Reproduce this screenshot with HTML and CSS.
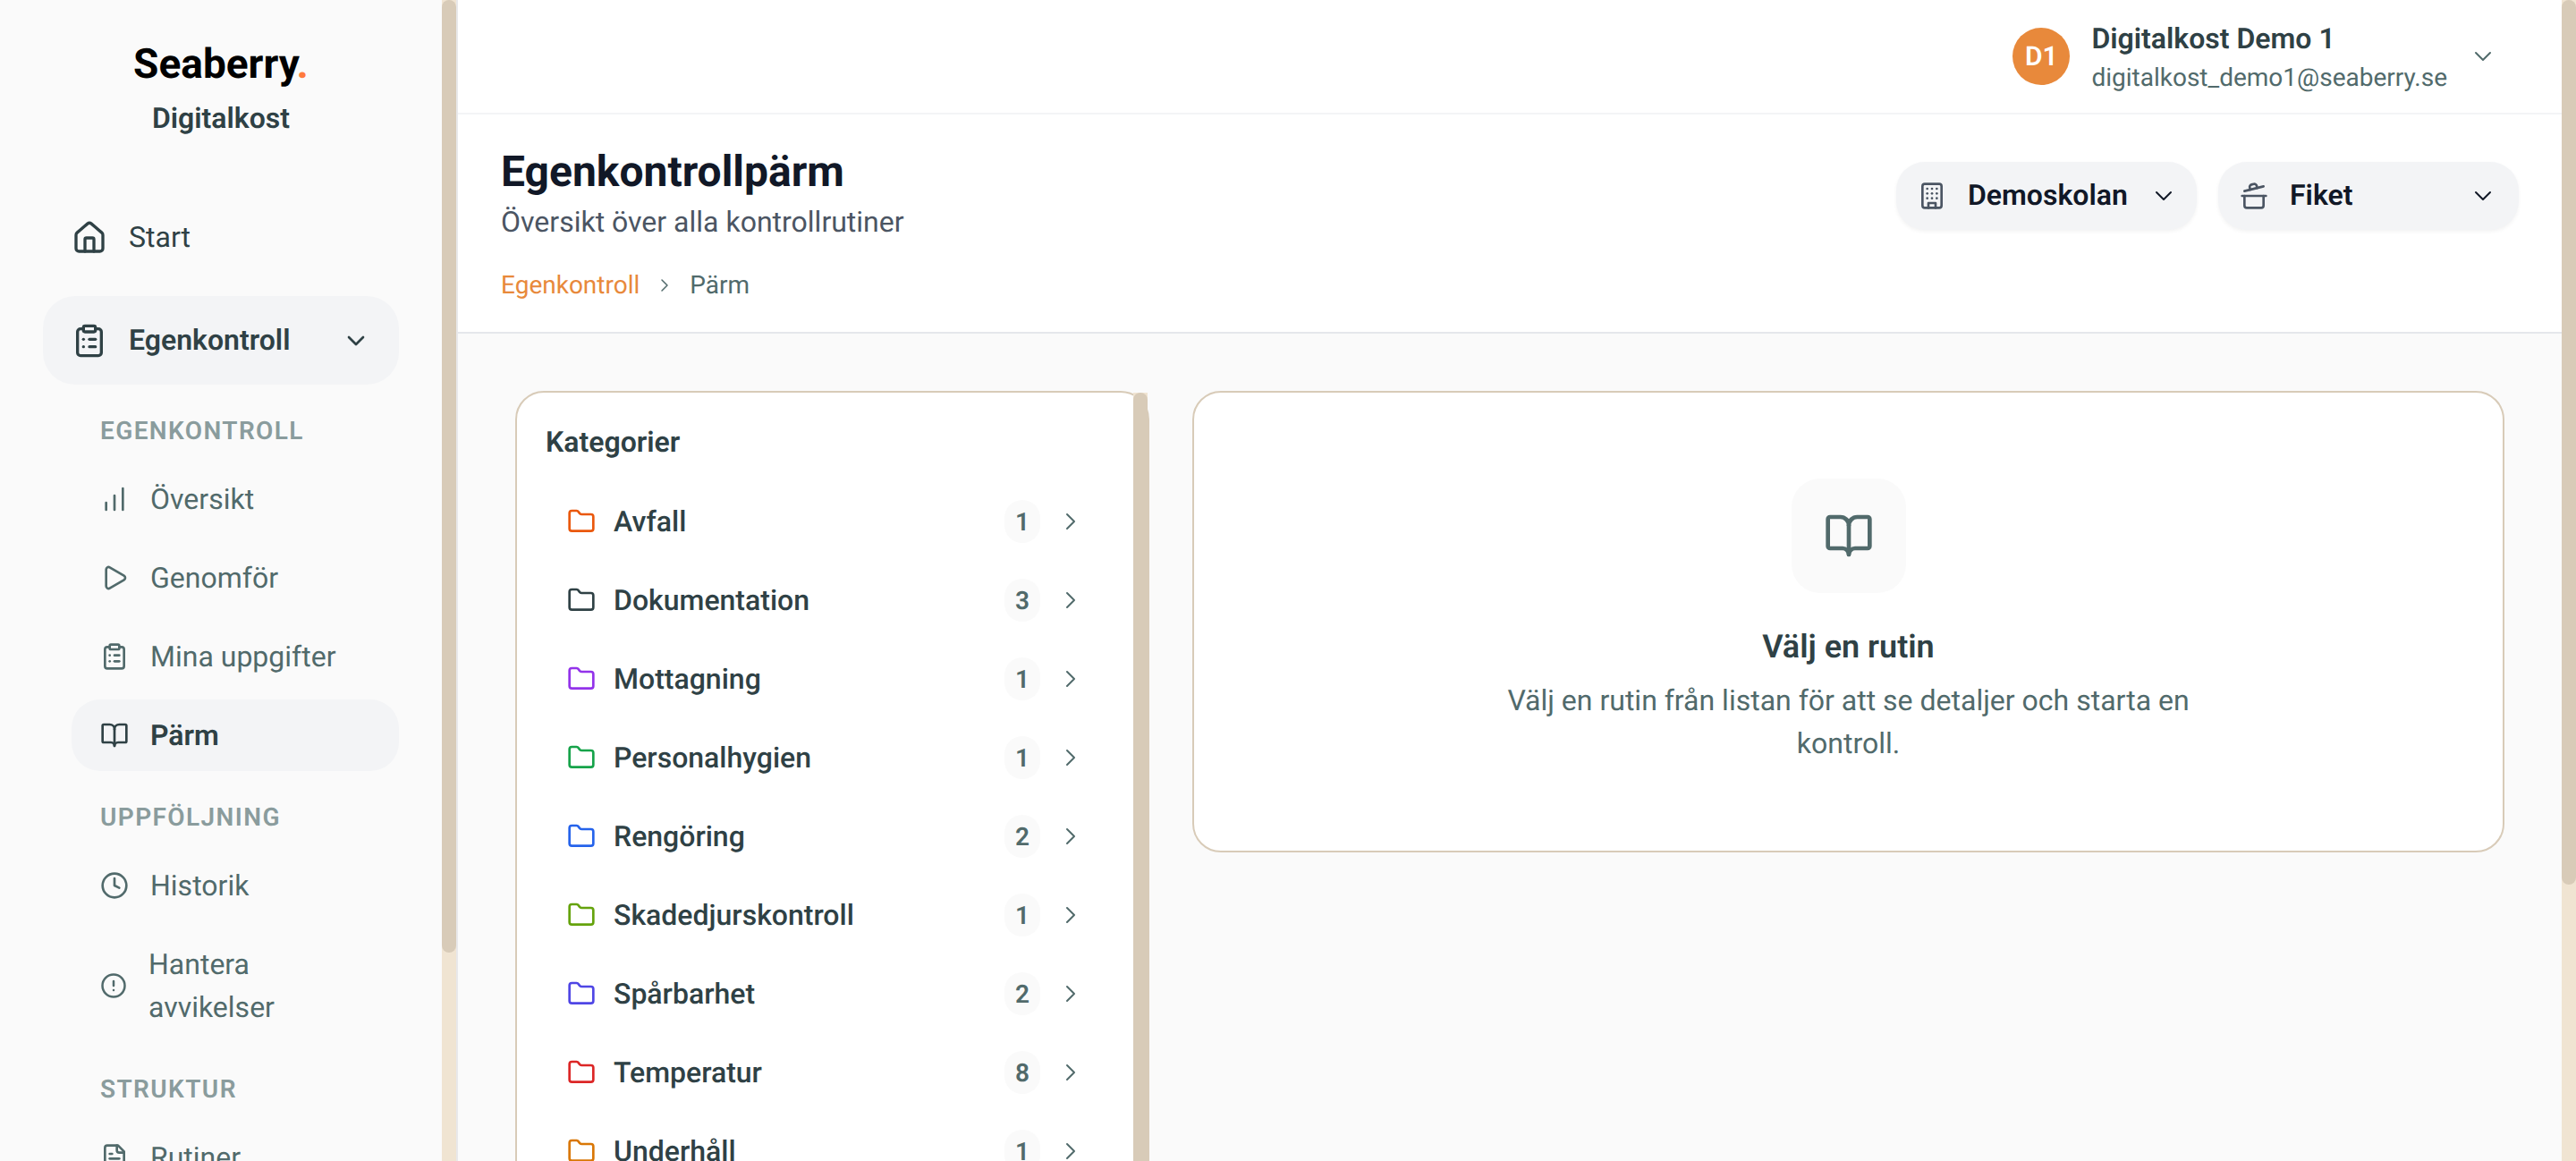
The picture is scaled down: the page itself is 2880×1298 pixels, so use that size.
FILE: index.html
```html
<!DOCTYPE html>
<html lang="sv">
<head>
<meta charset="utf-8">
<title>Egenkontrollpärm</title>
<link rel="stylesheet" href="styles.css">
</head>
<body>
<svg class="sprite" xmlns="http://www.w3.org/2000/svg">
  <symbol id="i-home" viewBox="0 0 24 24"><path d="M15 21v-8a1 1 0 0 0-1-1h-4a1 1 0 0 0-1 1v8"/><path d="M3 10a2 2 0 0 1 .709-1.528l7-5.999a2 2 0 0 1 2.582 0l7 5.999A2 2 0 0 1 21 10v9a2 2 0 0 1-2 2H5a2 2 0 0 1-2-2z"/></symbol>
  <symbol id="i-clip" viewBox="0 0 24 24"><rect x="8" y="2" width="8" height="4" rx="1" ry="1"/><path d="M16 4h2a2 2 0 0 1 2 2v14a2 2 0 0 1-2 2H6a2 2 0 0 1-2-2V6a2 2 0 0 1 2-2h2"/><path d="M12 11h4"/><path d="M12 16h4"/><path d="M8 11h.01"/><path d="M8 16h.01"/></symbol>
  <symbol id="i-down" viewBox="0 0 24 24"><path d="m6 9 6 6 6-6"/></symbol>
  <symbol id="i-right" viewBox="0 0 24 24"><path d="m9 18 6-6-6-6"/></symbol>
  <symbol id="i-bars" viewBox="0 0 24 24"><path d="M5 21v-6"/><path d="M12 21V9"/><path d="M19 21V3"/></symbol>
  <symbol id="i-play" viewBox="0 0 24 24"><path d="M5 5a2 2 0 0 1 3.008-1.728l11.997 6.998a2 2 0 0 1 .003 3.458l-12 7A2 2 0 0 1 5 19z"/></symbol>
  <symbol id="i-book" viewBox="0 0 24 24"><path d="M12 7v14"/><path d="M3 18a1 1 0 0 1-1-1V4a1 1 0 0 1 1-1h5a4 4 0 0 1 4 4 4 4 0 0 1 4-4h5a1 1 0 0 1 1 1v13a1 1 0 0 1-1 1h-6a3 3 0 0 0-3 3 3 3 0 0 0-3-3z"/></symbol>
  <symbol id="i-clock" viewBox="0 0 24 24"><circle cx="12" cy="12" r="10"/><path d="M12 6v6l4 2"/></symbol>
  <symbol id="i-alert" viewBox="0 0 24 24"><circle cx="12" cy="12" r="10"/><path d="M12 8v4"/><path d="M12 16h.01"/></symbol>
  <symbol id="i-file" viewBox="0 0 24 24"><path d="M15 2H6a2 2 0 0 0-2 2v16a2 2 0 0 0 2 2h12a2 2 0 0 0 2-2V7Z"/><path d="M14 2v4a2 2 0 0 0 2 2h4"/><path d="M10 9H8"/><path d="M16 13H8"/><path d="M16 17H8"/></symbol>
  <symbol id="i-folder" viewBox="0 0 24 24"><path d="M20 20a2 2 0 0 0 2-2V8a2 2 0 0 0-2-2h-7.9a2 2 0 0 1-1.69-.9L9.6 3.9A2 2 0 0 0 7.93 3H4a2 2 0 0 0-2 2v13a2 2 0 0 0 2 2Z"/></symbol>
  <symbol id="i-building" viewBox="0 0 24 24"><rect x="4" y="2" width="16" height="20" rx="2" ry="2"/><path d="M9 22v-4h6v4"/><path d="M8 6h.01"/><path d="M16 6h.01"/><path d="M12 6h.01"/><path d="M12 10h.01"/><path d="M12 14h.01"/><path d="M16 10h.01"/><path d="M16 14h.01"/><path d="M8 10h.01"/><path d="M8 14h.01"/></symbol>
  <symbol id="i-pot" viewBox="0 0 24 24"><path d="M2 12h20"/><path d="M20 12v8a2 2 0 0 1-2 2H6a2 2 0 0 1-2-2v-8"/><path d="m4 8 16-4"/><path d="m8.86 6.78-.45-1.81a2 2 0 0 1 1.45-2.43l1.94-.48a2 2 0 0 1 2.43 1.46l.45 1.8"/></symbol>
</svg>

<div class="app">
  <aside class="sidebar">
    <div class="brand">
      <div class="logo">Seaberry<span class="logo-dot">.</span></div>
      <div class="brand-sub">Digitalkost</div>
    </div>
    <nav class="nav">
      <a class="nav-main"><svg class="ic ic-40"><use href="#i-home"/></svg><span>Start</span></a>
      <a class="nav-main is-open"><svg class="ic ic-40"><use href="#i-clip"/></svg><span class="grow">Egenkontroll</span><svg class="ic ic-32"><use href="#i-down"/></svg></a>
      <div class="nav-group">
        <div class="nav-label">EGENKONTROLL</div>
        <a class="nav-sub"><svg class="ic ic-32"><use href="#i-bars"/></svg><span>Översikt</span></a>
        <a class="nav-sub"><svg class="ic ic-32"><use href="#i-play"/></svg><span>Genomför</span></a>
        <a class="nav-sub"><svg class="ic ic-32"><use href="#i-clip"/></svg><span>Mina uppgifter</span></a>
        <a class="nav-sub is-active"><svg class="ic ic-32"><use href="#i-book"/></svg><span>Pärm</span></a>
        <div class="nav-label">UPPFÖLJNING</div>
        <a class="nav-sub"><svg class="ic ic-32"><use href="#i-clock"/></svg><span>Historik</span></a>
        <a class="nav-sub is-wrap"><svg class="ic ic-30"><use href="#i-alert"/></svg><span>Hantera avvikelser</span></a>
        <div class="nav-label">STRUKTUR</div>
        <a class="nav-sub"><svg class="ic ic-32"><use href="#i-file"/></svg><span>Rutiner</span></a>
      </div>
    </nav>
    <div class="scroll-track"><div class="scroll-thumb thumb-side"></div></div>
  </aside>

  <main class="main">
    <header class="topbar">
      <div class="avatar">D1</div>
      <div class="user">
        <div class="user-name">Digitalkost Demo 1</div>
        <div class="user-mail">digitalkost_demo1@seaberry.se</div>
      </div>
      <svg class="ic ic-32 thin user-chev"><use href="#i-down"/></svg>
    </header>

    <section class="pagehead">
      <div class="pagehead-text">
        <h1 class="title">Egenkontrollpärm</h1>
        <p class="subtitle">Översikt över alla kontrollrutiner</p>
        <div class="crumbs">
          <a class="crumb-link">Egenkontroll</a>
          <svg class="ic ic-24 thin crumb-sep"><use href="#i-right"/></svg>
          <span class="crumb-here">Pärm</span>
        </div>
      </div>
      <div class="pickers">
        <button class="picker"><svg class="ic ic-32 picker-ic"><use href="#i-building"/></svg><span class="grow picker-text">Demoskolan</span><svg class="ic ic-32 thin"><use href="#i-down"/></svg></button>
        <button class="picker"><svg class="ic ic-32 picker-ic"><use href="#i-pot"/></svg><span class="grow picker-text">Fiket</span><svg class="ic ic-32 thin"><use href="#i-down"/></svg></button>
      </div>
    </section>

    <section class="content">
      <div class="panel cats">
        <h2 class="cats-title">Kategorier</h2>
        <ul class="cat-list">
          <li class="cat"><svg class="ic ic-32 c-orange"><use href="#i-folder"/></svg><span class="cat-name">Avfall</span><span class="badge">1</span><svg class="ic ic-32 thin cat-chev"><use href="#i-right"/></svg></li>
          <li class="cat"><svg class="ic ic-32 c-dark"><use href="#i-folder"/></svg><span class="cat-name">Dokumentation</span><span class="badge">3</span><svg class="ic ic-32 thin cat-chev"><use href="#i-right"/></svg></li>
          <li class="cat"><svg class="ic ic-32 c-purple"><use href="#i-folder"/></svg><span class="cat-name">Mottagning</span><span class="badge">1</span><svg class="ic ic-32 thin cat-chev"><use href="#i-right"/></svg></li>
          <li class="cat"><svg class="ic ic-32 c-green"><use href="#i-folder"/></svg><span class="cat-name">Personalhygien</span><span class="badge">1</span><svg class="ic ic-32 thin cat-chev"><use href="#i-right"/></svg></li>
          <li class="cat"><svg class="ic ic-32 c-blue"><use href="#i-folder"/></svg><span class="cat-name">Rengöring</span><span class="badge">2</span><svg class="ic ic-32 thin cat-chev"><use href="#i-right"/></svg></li>
          <li class="cat"><svg class="ic ic-32 c-lime"><use href="#i-folder"/></svg><span class="cat-name">Skadedjurskontroll</span><span class="badge">1</span><svg class="ic ic-32 thin cat-chev"><use href="#i-right"/></svg></li>
          <li class="cat"><svg class="ic ic-32 c-indigo"><use href="#i-folder"/></svg><span class="cat-name">Spårbarhet</span><span class="badge">2</span><svg class="ic ic-32 thin cat-chev"><use href="#i-right"/></svg></li>
          <li class="cat"><svg class="ic ic-32 c-red"><use href="#i-folder"/></svg><span class="cat-name">Temperatur</span><span class="badge">8</span><svg class="ic ic-32 thin cat-chev"><use href="#i-right"/></svg></li>
          <li class="cat"><svg class="ic ic-32 c-amber"><use href="#i-folder"/></svg><span class="cat-name">Underhåll</span><span class="badge">1</span><svg class="ic ic-32 thin cat-chev"><use href="#i-right"/></svg></li>
        </ul>
        <div class="panel-track"><div class="panel-thumb"></div></div>
      </div>
      <div class="panel empty">
        <div class="empty-tile"><svg class="ic ic-56"><use href="#i-book"/></svg></div>
        <h3 class="empty-title">Välj en rutin</h3>
        <p class="empty-text">Välj en rutin från listan för att se detaljer och starta en kontroll.</p>
      </div>
    </section>
    <div class="scroll-track"><div class="scroll-thumb thumb-main"></div></div>
  </main>
</div>
</body>
</html>
```

FILE: styles.css
```css
* { box-sizing: border-box; }
html, body { margin: 0; height: 100%; overflow: hidden; }
body { font-family: Roboto, "Liberation Sans", sans-serif; color: #2f4145; background: #fafafa; text-rendering: geometricPrecision; }
.sprite { display: none; }
h1, h2, h3, p, ul { margin: 0; padding: 0; }
ul { list-style: none; }

.ic { flex: none; fill: none; stroke: currentColor; stroke-width: 2; stroke-linecap: round; stroke-linejoin: round; }
.thin { stroke-width: 1.5; }
.ic-24 { width: 24px; height: 24px; }
.ic-30 { width: 30px; height: 30px; }
.ic-32 { width: 32px; height: 32px; }
.ic-40 { width: 40px; height: 40px; }
.ic-56 { width: 56px; height: 56px; }
.grow { flex: 1; text-align: left; }

.app { display: flex; height: 1298px; }

.sidebar { position: relative; flex: none; width: 512px; height: 100%; overflow: hidden; padding-right: 16px; background: #fafafa; border-right: 2px solid #e8e8ea; }
.brand { display: flex; flex-direction: column; align-items: center; padding-top: 42px; height: 216px; }
.logo { font-size: 46px; line-height: 60px; font-weight: 700; color: #000; }
.logo-dot { color: #ff7a3d; }
.brand-sub { margin-top: 10px; font-size: 32px; line-height: 40px; font-weight: 600; color: #2f4145; }

.nav { display: flex; flex-direction: column; gap: 16px; padding: 0 48px; }
.nav-main { display: flex; align-items: center; gap: 24px; height: 99px; padding: 0 32px; border-radius: 36px; font-size: 32px; line-height: 46px; color: #2f4145; }
.nav-main span { padding-bottom: 1px; }
.nav-main.is-open { background: #f3f4f6; font-weight: 600; }
.nav-group { display: flex; flex-direction: column; gap: 8px; padding-left: 32px; margin-top: 16px; }
.nav-label { height: 38px; margin-top: 24px; margin-bottom: 10px; padding-left: 32px; font-size: 28px; line-height: 40px; font-weight: 600; letter-spacing: 1.4px; color: #8a9c9d; }
.nav-label:first-child { margin-top: 0; }
.nav-sub { display: flex; align-items: center; gap: 24px; min-height: 80px; padding: 16px 32px; font-size: 32px; line-height: 48px; color: #516a6b; border-radius: 32px; }
.nav-sub.is-active { background: #f3f4f6; color: #2f4145; font-weight: 600; }
.is-wrap span { width: 200px; }

.scroll-track { position: absolute; top: 0; right: 0; bottom: 0; width: 16px; background: #f0e4d2; }
.scroll-thumb { width: 100%; border-radius: 8px; background: #d8cbb8; }
.thumb-side { height: 1065px; }
.thumb-main { height: 989px; }

.main { position: relative; flex: 1; min-width: 0; height: 100%; overflow: hidden; padding-right: 16px; background: #fafafa; }

.topbar { display: flex; align-items: center; justify-content: flex-end; gap: 24px; height: 128px; padding-right: 72px; background: #fff; border-bottom: 2px solid #f3f4f6; }
.avatar { display: flex; align-items: center; justify-content: center; width: 64px; height: 64px; border-radius: 50%; background: #e8893b; color: #fff; font-size: 30px; font-weight: 600; }
.user { display: flex; flex-direction: column; padding-top: 4px; }
.user-name { font-size: 32px; line-height: 44px; font-weight: 600; color: #2f4145; }
.user-mail { font-size: 28px; line-height: 44px; color: #516a6b; }
.user-chev { color: #516a6b; }

.pagehead { display: flex; justify-content: space-between; align-items: flex-start; height: 245px; padding: 32px 48px 0; background: #fff; border-bottom: 2px solid #e5e7eb; }
.title { font-size: 48px; line-height: 64px; font-weight: 700; color: #111827; }
.subtitle { font-size: 32px; line-height: 48px; color: #4b5563; }
.crumbs { display: flex; align-items: center; gap: 16px; margin-top: 26px; font-size: 28px; line-height: 42px; }
.crumb-link { color: #e8893b; }
.crumb-sep { color: #516a6b; }
.crumb-here { color: #516a6b; }
.pickers { display: flex; gap: 24px; margin-top: 21px; }
.picker { display: flex; align-items: center; gap: 24px; width: 336px; height: 76px; padding: 0 24px; border: 0; border-radius: 32px; background: #f3f4f6; box-shadow: 0 2px 4px rgba(0,0,0,.05); font: 600 32px Roboto, "Liberation Sans", sans-serif; color: #111827; text-rendering: geometricPrecision; }
.picker-text { padding-bottom: 2px; }
.picker-ic { color: #4b5563; }

.content { display: grid; grid-template-columns: 709px 1fr; gap: 48px; align-items: start; padding: 64px; }
.panel { border: 2px solid #d8cbb8; border-radius: 32px; background: #fff; }

.cats { position: relative; height: 1200px; padding: 0 48px 32px 32px; }
.cats-title { padding-top: 35px; font-size: 32px; line-height: 40px; font-weight: 600; color: #2f4145; }
.cat-list { margin-top: 25px; }
.cat { display: flex; align-items: center; gap: 20px; height: 88px; padding: 0 22px 0 24px; }
.cat-name { flex: 1; font-size: 32px; font-weight: 500; color: #2f4145; }
.badge { display: flex; align-items: center; justify-content: center; width: 40px; height: 48px; border-radius: 24px; background: #fafafa; font-size: 28px; font-weight: 600; color: #516a6b; }
.cat-chev { margin-left: -2px; color: #516a6b; }
.panel-track { position: absolute; top: 0; right: 0; bottom: 0; width: 16px; background: #f0e4d2; }
.panel-thumb { height: 100%; border-radius: 8px; background: #d8cbb8; }

.c-orange { color: #ea580c; }
.c-dark { color: #2f4145; }
.c-purple { color: #9333ea; }
.c-green { color: #16a34a; }
.c-blue { color: #2563eb; }
.c-lime { color: #65a30d; }
.c-indigo { color: #4f46e5; }
.c-red { color: #dc2626; }
.c-amber { color: #d97706; }

.empty { display: flex; flex-direction: column; align-items: center; padding: 96px 0; text-align: center; }
.empty-tile { display: flex; align-items: center; justify-content: center; width: 128px; height: 128px; border-radius: 32px; background: #fafafa; color: #516a6b; }
.empty-title { margin-top: 36px; font-size: 36px; line-height: 48px; font-weight: 600; color: #2f4145; }
.empty-text { max-width: 840px; margin-top: 12px; font-size: 32px; line-height: 48px; color: #516a6b; }
```
